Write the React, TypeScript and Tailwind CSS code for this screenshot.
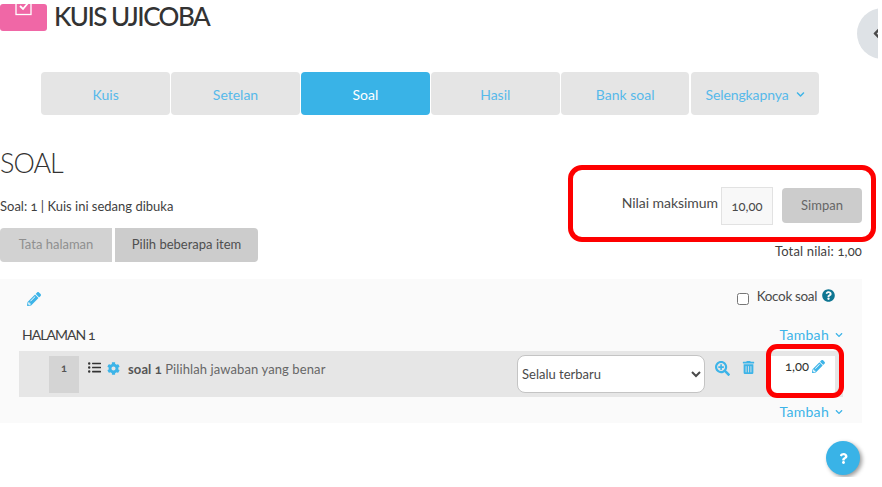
import { FaPencilAlt, FaCog, FaSearchPlus, FaTrashAlt, FaQuestionCircle, FaQuestion, FaChevronDown, FaChevronLeft, FaListUl } from 'react-icons/fa'

const TABS = ['Kuis', 'Setelan', 'Soal', 'Hasil', 'Bank soal']

function Tambah() {
  return (
    <span className="flex items-center gap-[6px] pt-[2px] text-[14px] leading-none tracking-[0.3px] text-[#3db4e8]">
      Tambah
      <FaChevronDown className="text-[8px]" />
    </span>
  )
}

export default function App() {
  return (
    <div className="h-[487px] w-[882px] overflow-hidden bg-white">
      <div className="relative h-[477px] w-[878px] overflow-hidden bg-white font-['Lato',sans-serif] text-[#3f3f3f] oldstyle-nums">
        {/* Heading */}
        <div className="flex h-[31px] items-start gap-[7px]">
          <div className="mt-[4px] flex h-[27px] w-[47px] justify-center overflow-hidden rounded-[3px] bg-[#f067a6]">
            <svg width="18" height="16" viewBox="0 0 18 16" className="mt-[-4px]" fill="none" stroke="white" strokeWidth="1.3">
              <rect x="1" y="0" width="15" height="14.5" />
              <path d="M5 6 L8 9 L13 3" strokeWidth="1.8" />
            </svg>
          </div>
          <h1 className="text-[26px] leading-[33px] font-medium tracking-[-1.55px] text-[#333]">KUIS UJICOBA</h1>
        </div>

        {/* Tabs */}
        <div className="mt-[41px] flex gap-[1.2px] pl-[41.3px]">
          {TABS.map((t) => (
            <div
              key={t}
              className={`flex h-[43px] w-[128.7px] items-center justify-center rounded-[4px] pt-px text-[14px] ${t === 'Soal' ? 'bg-[#39b3e7] text-white' : 'bg-[#e5e5e5] text-[#57b9ea]'}`}
            >
              {t}
            </div>
          ))}
          <div className="flex h-[43px] w-[128.7px] items-center justify-center gap-[7px] rounded-[4px] bg-[#e5e5e5] pt-px text-[14px] tracking-[-0.1px] text-[#57b9ea]">
            Selengkapnya
            <FaChevronDown className="text-[9px] text-[#3db4e8]" />
          </div>
        </div>

        {/* Title and max grade */}
        <div className="flex h-[164px] w-[862px] justify-between">
          <div>
            <h2 className="mt-[31px] text-[27px] leading-[34px] font-light tracking-[-1px] text-[#333]">SOAL</h2>
            <p className="mt-[17px] text-[13px] leading-[18px] text-[#3f3f3f]">Soal: 1 | Kuis ini sedang dibuka</p>
            <div className="mt-[13px] flex gap-[3px]">
              <div className="flex h-[34px] w-[112px] items-center justify-center rounded-l-[4px] bg-[#d2d2d2] text-[13px] text-[#8f8f8f]">Tata halaman</div>
              <div className="flex h-[34px] w-[143px] items-center justify-center rounded-r-[4px] bg-[#cccccc] text-[13px] text-[#4f4f4f]">Pilih beberapa item</div>
            </div>
          </div>
          <div className="flex flex-col items-end">
            <div className="mt-[72px] flex items-start">
              <span className="mt-[6px] text-[14px] leading-[20px] tracking-[-0.05px] text-[#4a4a4a]">Nilai maksimum</span>
              <div className="ml-[3px] flex h-[38px] w-[52px] items-center justify-center border border-[#e2e2e2] bg-[#f8f8f8] pt-[2px] text-[13px] text-[#4a4a4a]">10,00</div>
              <div className="mt-px ml-[9px] flex h-[35px] w-[80px] items-center justify-center rounded-[4px] bg-[#cccccc] text-[13px] text-[#666]">Simpan</div>
            </div>
            <span className="mt-[17px] text-[13px] leading-[18px] tracking-[0.15px] text-[#3f3f3f]">Total nilai: 1,00</span>
          </div>
        </div>

        {/* Question panel */}
        <div className="h-[144px] w-[862px] bg-[#fafafa] pt-[13px]">
          <div className="flex h-[19px] items-start justify-between pr-[27px] pl-[27px]">
            <FaPencilAlt className="text-[14px] text-[#3db4e8]" />
            <div className="flex items-start">
              <input type="checkbox" readOnly className="mt-px h-[12px] w-[12px]" />
              <span className="mt-[-4px] ml-2 text-[13.5px] leading-[16px] tracking-[-0.35px] text-[#4a4a4a]">Kocok soal</span>
              <FaQuestionCircle className="mt-[-3px] ml-[5px] text-[13px] text-[#0f7692]" />
            </div>
          </div>
          <div className="mt-[14px] flex h-[18px] items-center justify-between pr-[19px] pl-[22px]">
            <span className="text-[14px] tracking-[-0.95px] text-[#3f3f3f]">HALAMAN 1</span>
            <Tambah />
          </div>
          <div className="mt-[8px] ml-[19px] flex h-[46px] w-[824px] bg-[#e6e6e6]">
            <div className="mt-[5px] ml-[30px] flex h-[37px] w-[30px] justify-center bg-[#d4d4d4] pt-[4px] text-[11px] leading-[16px] font-bold text-[#555]">1</div>
            <FaListUl className="mt-[10px] ml-[9px] text-[13px] text-[#333]" />
            <FaCog className="mt-[11px] ml-[6px] text-[13px] text-[#3db4e8]" />
            <p className="mt-[9px] ml-[8px] w-[389px] text-[13px] leading-[18px] tracking-[0.1px] text-[#666]">
              <b className="font-bold text-[#555]">soal 1</b> Pilihlah jawaban yang benar
            </p>
            <select className="mt-[4px] h-[38px] w-[188px] rounded-[8px] border border-[#c4c4c4] bg-white pl-0 text-[13px] text-[#4a4a4a]" defaultValue="latest">
              <option value="latest">Selalu terbaru</option>
            </select>
            <FaSearchPlus className="mt-[10px] ml-[10px] text-[15px] text-[#3db4e8]" />
            <FaTrashAlt className="mt-[10px] ml-[12px] text-[13px] text-[#3db4e8]" />
            <div className="mt-[5px] ml-[16px] flex h-[41px] w-[64px] items-start justify-center gap-[3px] bg-white pt-[1px] pl-[4px] text-[13px] leading-[18px] text-[#333]">
              1,00
              <FaPencilAlt className="mt-[3px] text-[13px] text-[#3db4e8]" />
            </div>
          </div>
          <div className="mt-[6px] flex justify-end pr-[19px]">
            <Tambah />
          </div>
        </div>

        {/* Red annotations */}
        <div className="absolute top-[165px] left-[568px] h-[77px] w-[308px] rounded-[14px] border-[5px] border-[#fe0000]" />
        <div className="absolute top-[344px] left-[766px] h-[54px] w-[78px] rounded-[11px] border-[5px] border-[#fe0000]" />

        {/* Drawer toggle */}
        <div className="absolute top-[8px] left-[857px] flex h-[51px] w-[51px] items-center rounded-full bg-[#dee2e6] pl-[13px]">
          <FaChevronLeft className="text-[15px] text-[#4a4a4a]" />
        </div>

        {/* Help */}
        <div className="absolute top-[441px] left-[826px] flex h-[34px] w-[34px] items-center justify-center rounded-full bg-[#39b3e7] shadow-[2px_2px_4px_rgba(0,0,0,0.4)]">
          <FaQuestion className="text-[11px] text-white" />
        </div>
      </div>
    </div>
  )
}
